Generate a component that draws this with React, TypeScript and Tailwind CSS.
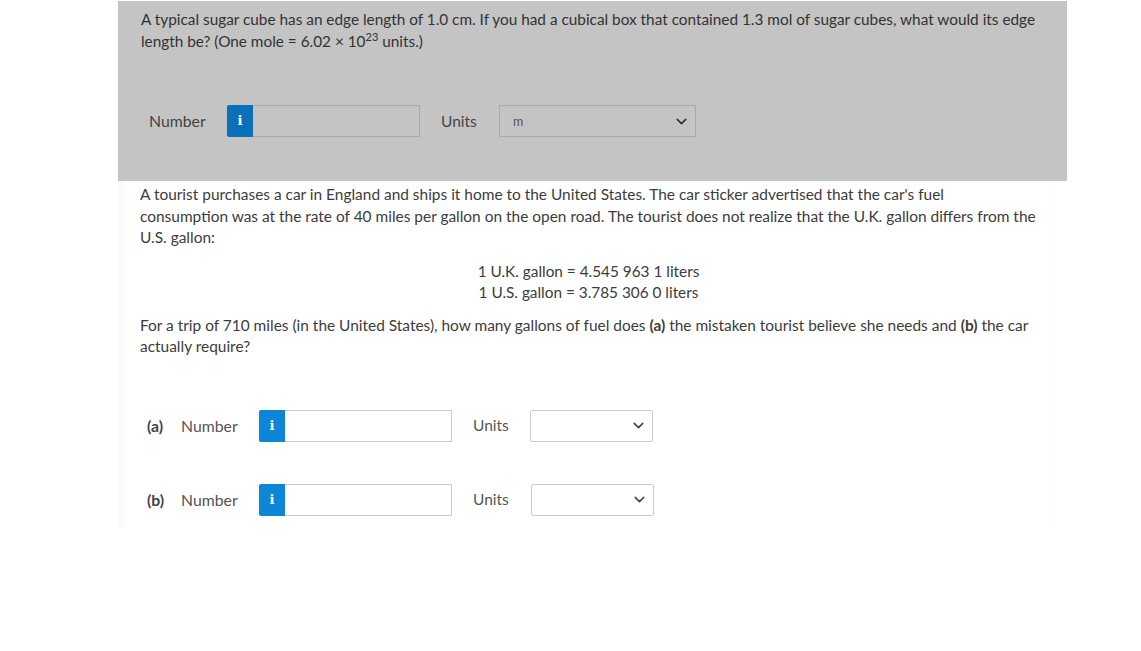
import React from "react";
import { ChevronDown } from "lucide-react";

const InfoButton = ({ color }: { color: string }) => (
  <div className={`w-[26px] h-[32px] rounded-l-[2px] flex items-center justify-center text-white text-[13px] font-bold font-['DejaVu_Serif',serif] ${color}`}>
    i
  </div>
);

const PartRow = ({ label, selectGap, className }: { label: string; selectGap: string; className: string }) => (
  <div className={`flex items-center h-[32px] ${className}`}>
    <span className="font-bold w-[34px] text-[15.8px] text-[#444]">{label}</span>
    <span className="w-[78px] text-[15.8px] text-[#555]">Number</span>
    <InfoButton color="bg-[#0d86d8]" />
    <div className="w-[167px] h-[32px] border border-l-0 border-[#ccc] bg-white" />
    <span className={`ml-[21px] pt-px text-[15.5px] text-[#555] ${selectGap}`}>Units</span>
    <div className="w-[123px] h-[32px] border border-[#ccc] rounded-[2px] flex items-center justify-end pr-[5px]">
      <ChevronDown size={17} strokeWidth={2.2} className="text-[#444]" />
    </div>
  </div>
);

export default function App() {
  return (
    <div className="h-[651px] bg-white font-['Lato',sans-serif] text-[15.35px] leading-[21.5px] text-[#3c3c3c] pt-px pl-[118px]">
      <div className="w-[949px] h-[180px] bg-[#c4c4c4] pt-[8px] pl-[23px] pr-[20px] flex flex-col">
        <p className="text-[#333]">
          A typical sugar cube has an edge length of 1.0 cm. If you had a cubical box that contained 1.3 mol of sugar cubes, what would its edge length be? (One mole = 6.02 × 10
          <sup className="text-[11px] leading-none">23</sup> units.)
        </p>
        <div className="flex items-center h-[32px] mt-[53px] ml-[8px] text-[#444]">
          <span className="w-[78px] text-[15.8px]">Number</span>
          <InfoButton color="bg-[#0a70b8]" />
          <div className="w-[167px] h-[32px] border border-l-0 border-[#aaa]" />
          <span className="ml-[21px] w-[58px] pt-[2px] text-[15.5px]">Units</span>
          <div className="w-[197px] h-[32px] border border-[#aaa] flex items-center justify-between pl-[13px] pr-[5px] pt-px text-[12.5px] text-[#555]">
            m
            <ChevronDown size={17} strokeWidth={2.2} className="text-[#333]" />
          </div>
        </div>
      </div>
      <div className="w-[936px] h-[347px] border-l-[6px] border-r border-[#fafafa] pl-[16px] pt-[3px] pr-[10px] text-[15.45px]">
        <p>
          A tourist purchases a car in England and ships it home to the United States. The car sticker advertised that the car's fuel
          <br />
          consumption was at the rate of 40 miles per gallon on the open road. The tourist does not realize that the U.K. gallon differs from the
          <br />
          U.S. gallon:
        </p>
        <div className="mt-[12px] text-center text-[15.35px] pr-[6px]">
          <p>1 U.K. gallon = 4.545 963 1 liters</p>
          <p>1 U.S. gallon = 3.785 306 0 liters</p>
        </div>
        <p className="mt-[11px]">
          For a trip of 710 miles (in the United States), how many gallons of fuel does <b>(a)</b> the mistaken tourist believe she needs and <b>(b)</b> the car
          <br />
          actually require?
        </p>
        <PartRow label="(a)" selectGap="w-[57px]" className="mt-[52px] ml-[7px]" />
        <PartRow label="(b)" selectGap="w-[58px]" className="mt-[42px] ml-[7px]" />
      </div>
    </div>
  );
}
